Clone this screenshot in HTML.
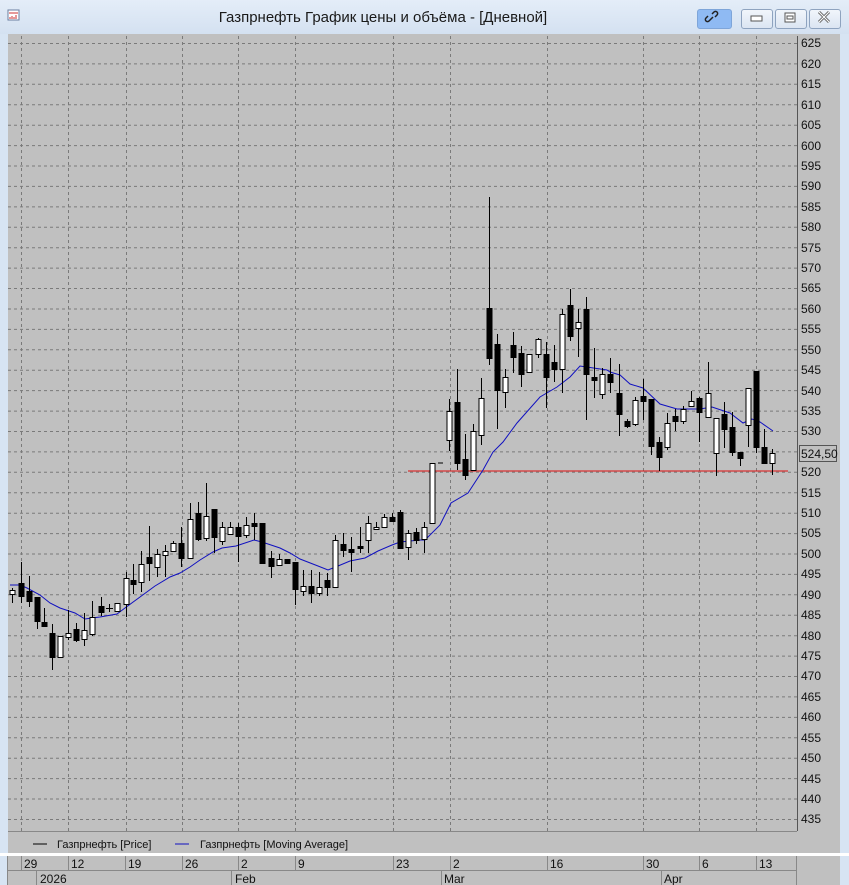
<!DOCTYPE html>
<html><head><meta charset="utf-8"><style>
html,body{margin:0;padding:0;width:849px;height:885px;overflow:hidden;background:#d7e4f3;font-family:"Liberation Sans","DejaVu Sans",sans-serif;}
.title{position:absolute;left:0;top:0;width:849px;height:34px;background:linear-gradient(#e4edf8,#d4e1f1);}
.title .t{position:absolute;left:0;width:766px;top:9px;text-align:center;font-size:15px;color:#1a1a1a;}
.btn{position:absolute;top:9px;height:18px;border:1px solid #8ea3bf;border-radius:3px;background:linear-gradient(#f1f5fb,#dbe5f2);}
svg{position:absolute;left:0;top:0;}
</style></head><body>
<div class="title"><div class="t">Газпрнефть График цены и объёма - [Дневной]</div>
<div class="btn" style="left:697px;width:33px;background:#8fbaf3;border-color:#7ea5d9"></div>
<div class="btn" style="left:741px;width:30px"></div>
<div class="btn" style="left:775px;width:30px"></div>
<div class="btn" style="left:809px;width:30px"></div>
</div>
<svg width="849" height="885" xmlns="http://www.w3.org/2000/svg">
<rect x="8" y="10" width="11" height="10" fill="#fff" stroke="#6b7fa0"/>
<path d="M9 13h9M10 17v2M12 16v3M14 17v2M16 15v4" stroke="#c33" stroke-width="1"/>
<path d="M707 22l4-4M710 15l2-2a2 2 0 0 1 3 3l-2 2M709 20l-2 2a2 2 0 0 1-3-3l2-2" stroke="#222" stroke-width="1.5" fill="none" transform="translate(2,-1)"/>
<rect x="751" y="16" width="11" height="5" fill="#fff" stroke="#555"/>
<rect x="785" y="13" width="10" height="9" fill="#fff" stroke="#555"/><rect x="787" y="16" width="6" height="3" fill="none" stroke="#555"/>
<path d="M819 12l10 10M829 12l-10 10" stroke="#666" stroke-width="3"/><path d="M819 12l10 10M829 12l-10 10" stroke="#fff" stroke-width="1"/>
<rect x="8" y="34" width="832" height="820" fill="#c0c0c0"/>
<g stroke="#7a7a7a" stroke-dasharray="3,3" stroke-width="1">
<path d="M8 43.5H797M8 63.9H797M8 84.3H797M8 104.8H797M8 125.2H797M8 145.6H797M8 166H797M8 186.4H797M8 206.9H797M8 227.3H797M8 247.7H797M8 268.1H797M8 288.5H797M8 309H797M8 329.4H797M8 349.8H797M8 370.2H797M8 390.6H797M8 411.1H797M8 431.5H797M8 451.9H797M8 472.3H797M8 492.7H797M8 513.2H797M8 533.6H797M8 554H797M8 574.4H797M8 594.8H797M8 615.3H797M8 635.7H797M8 656.1H797M8 676.5H797M8 696.9H797M8 717.4H797M8 737.8H797M8 758.2H797M8 778.6H797M8 799H797M8 819.5H797"/>
<path d="M21.5 36V831M68.5 36V831M126.5 36V831M182.5 36V831M238.5 36V831M295.5 36V831M393.5 36V831M450.5 36V831M547.5 36V831M643.5 36V831M699.5 36V831M756.5 36V831"/>
</g>
<line x1="797.5" y1="36" x2="797.5" y2="831" stroke="#555"/>
<g font-size="12" fill="#111">
<text x="801" y="47">625</text><text x="801" y="68">620</text><text x="801" y="88">615</text><text x="801" y="109">610</text><text x="801" y="129">605</text><text x="801" y="150">600</text><text x="801" y="170">595</text><text x="801" y="190">590</text><text x="801" y="211">585</text><text x="801" y="231">580</text><text x="801" y="252">575</text><text x="801" y="272">570</text><text x="801" y="292">565</text><text x="801" y="313">560</text><text x="801" y="333">555</text><text x="801" y="354">550</text><text x="801" y="374">545</text><text x="801" y="395">540</text><text x="801" y="415">535</text><text x="801" y="435">530</text><text x="801" y="476">520</text><text x="801" y="497">515</text><text x="801" y="517">510</text><text x="801" y="537">505</text><text x="801" y="558">500</text><text x="801" y="578">495</text><text x="801" y="599">490</text><text x="801" y="619">485</text><text x="801" y="640">480</text><text x="801" y="660">475</text><text x="801" y="680">470</text><text x="801" y="701">465</text><text x="801" y="721">460</text><text x="801" y="742">455</text><text x="801" y="762">450</text><text x="801" y="783">445</text><text x="801" y="803">440</text><text x="801" y="823">435</text>
</g>
<rect x="799.5" y="445.5" width="37" height="16" fill="#c0c0c0" stroke="#555"/>
<text x="801" y="458" font-size="12" fill="#111">524,50</text>
<line x1="408" y1="471" x2="788" y2="471" stroke="#e01010" stroke-width="1"/>
<polyline fill="none" stroke="#1010c0" stroke-width="1" points="10,585 20,585 27,588 40,595 50,603 60,608 75,613 85,619 92,618 100,617 117,614 125,608 140,597 155,586 170,577 180,573 190,567 200,560 213,552 222,548 236,546 254,540 262,542 280,548 290,553 300,559 318,566 328,570 338,566 350,561 365,558 378,551 392,545 400,542 420,540 425,540 440,525 451,503 468,493 483,470 493,452 503,442 517,423 540,397 557,387 570,377 580,366 607,370 610,372 620,375 630,384 643,388 660,404 677,409 700,409 712,407 730,413 743,423 752,419 760,422 773,431"/>
<g stroke="#000" stroke-width="1">
<path d="M12.5 588V603M21.5 562V603M29.5 576V607M37.5 597V629M44.5 608V626M52.5 624V670M60.5 636V657M68.5 610V640M76.5 623V642M84.5 613V646M92.5 601V636M101.5 597V616M109.5 604V612M117.5 603V611M126.5 572V617M133.5 564V594M141.5 551V592M149.5 526V581M157.5 549V577M165.5 545V577M173.5 541V552M181.5 527V567M190.5 503V558M198.5 502V541M206.5 483V541M214.5 509V553M222.5 522V545M230.5 522V535M238.5 523V562M246.5 517V538M254.5 513V540M262.5 523V563M271.5 551V578M279.5 554V566M287.5 559V563M295.5 562V605M303.5 570V596M311.5 570V603M319.5 572V596M327.5 573V596M335.5 535V587M343.5 533V557M351.5 537V572M360.5 527V553M368.5 516V553M376.5 522V530M384.5 514V527M392.5 513V521M400.5 510V549M408.5 530V560M416.5 528V544M424.5 522V553M432.5 463V523M449.5 399V451M457.5 369V470M465.5 434V480M473.5 424V470M481.5 378V445M489.5 197V365M497.5 334V429M505.5 369V408M513.5 332V373M521.5 346V387M529.5 354V372M538.5 338V358M546.5 342V408M554.5 345V382M562.5 309V393M570.5 289V341M578.5 309V357M586.5 297V420M594.5 348V398M602.5 368V399M610.5 358V393M619.5 364V436M627.5 419V428M635.5 397V426M643.5 379V420M651.5 399V455M659.5 437V471M667.5 413V450M675.5 409V431M683.5 406V424M691.5 391V407M699.5 397V442M708.5 362V417M716.5 418V476M724.5 402V448M732.5 412V456M740.5 452V466M748.5 388V447M756.5 371V453M764.5 429V463M772.5 449V475M438 463H443M106 608.5H113"/>
</g>
<g stroke="#000" stroke-width="1">
<rect x="10" y="590.5" width="5" height="4" fill="#fff"/>
<rect x="19" y="583.5" width="5" height="13" fill="#000"/>
<rect x="27" y="591.5" width="5" height="10" fill="#000"/>
<rect x="35" y="597.5" width="5" height="24" fill="#000"/>
<rect x="42" y="622.5" width="5" height="4" fill="#000"/>
<rect x="50" y="633.5" width="5" height="24" fill="#000"/>
<rect x="58" y="636.5" width="5" height="21" fill="#fff"/>
<rect x="66" y="633.5" width="5" height="4" fill="#fff"/>
<rect x="74" y="629.5" width="5" height="11" fill="#000"/>
<rect x="82" y="630.5" width="5" height="9" fill="#fff"/>
<rect x="90" y="617.5" width="5" height="17" fill="#fff"/>
<rect x="99" y="606.5" width="5" height="6" fill="#000"/>
<rect x="115" y="603.5" width="5" height="8" fill="#fff"/>
<rect x="124" y="578.5" width="5" height="26" fill="#fff"/>
<rect x="131" y="580.5" width="5" height="4" fill="#000"/>
<rect x="139" y="564.5" width="5" height="18" fill="#fff"/>
<rect x="147" y="557.5" width="5" height="6" fill="#000"/>
<rect x="155" y="554.5" width="5" height="13" fill="#fff"/>
<rect x="163" y="551.5" width="5" height="4" fill="#fff"/>
<rect x="171" y="543.5" width="5" height="8" fill="#fff"/>
<rect x="179" y="543.5" width="5" height="15" fill="#000"/>
<rect x="188" y="519.5" width="5" height="39" fill="#fff"/>
<rect x="196" y="513.5" width="5" height="26" fill="#000"/>
<rect x="204" y="516.5" width="5" height="22" fill="#fff"/>
<rect x="212" y="509.5" width="5" height="28" fill="#000"/>
<rect x="220" y="527.5" width="5" height="14" fill="#fff"/>
<rect x="228" y="527.5" width="5" height="7" fill="#fff"/>
<rect x="236" y="527.5" width="5" height="9" fill="#000"/>
<rect x="244" y="525.5" width="5" height="10" fill="#fff"/>
<rect x="252" y="523.5" width="5" height="3" fill="#000"/>
<rect x="260" y="523.5" width="5" height="40" fill="#000"/>
<rect x="269" y="558.5" width="5" height="8" fill="#000"/>
<rect x="277" y="559.5" width="5" height="6" fill="#fff"/>
<rect x="285" y="559.5" width="5" height="4" fill="#000"/>
<rect x="293" y="562.5" width="5" height="27" fill="#000"/>
<rect x="301" y="586.5" width="5" height="5" fill="#fff"/>
<rect x="309" y="586.5" width="5" height="7" fill="#000"/>
<rect x="317" y="587.5" width="5" height="6" fill="#fff"/>
<rect x="325" y="580.5" width="5" height="7" fill="#000"/>
<rect x="333" y="540.5" width="5" height="47" fill="#fff"/>
<rect x="341" y="544.5" width="5" height="6" fill="#000"/>
<rect x="349" y="549.5" width="5" height="3" fill="#000"/>
<rect x="358" y="546.5" width="5" height="2" fill="#000"/>
<rect x="366" y="523.5" width="5" height="17" fill="#fff"/>
<rect x="374" y="527.5" width="5" height="2" fill="#fff"/>
<rect x="382" y="517.5" width="5" height="10" fill="#fff"/>
<rect x="390" y="517.5" width="5" height="4" fill="#000"/>
<rect x="398" y="512.5" width="5" height="36" fill="#000"/>
<rect x="406" y="533.5" width="5" height="14" fill="#fff"/>
<rect x="414" y="532.5" width="5" height="8" fill="#000"/>
<rect x="422" y="527.5" width="5" height="12" fill="#fff"/>
<rect x="430" y="463.5" width="5" height="60" fill="#fff"/>
<rect x="447" y="411.5" width="5" height="29" fill="#fff"/>
<rect x="455" y="402.5" width="5" height="61" fill="#000"/>
<rect x="463" y="459.5" width="5" height="16" fill="#000"/>
<rect x="471" y="431.5" width="5" height="39" fill="#fff"/>
<rect x="479" y="398.5" width="5" height="37" fill="#fff"/>
<rect x="487" y="308.5" width="5" height="50" fill="#000"/>
<rect x="495" y="344.5" width="5" height="46" fill="#000"/>
<rect x="503" y="377.5" width="5" height="15" fill="#fff"/>
<rect x="511" y="345.5" width="5" height="12" fill="#000"/>
<rect x="519" y="353.5" width="5" height="21" fill="#000"/>
<rect x="527" y="354.5" width="5" height="18" fill="#fff"/>
<rect x="536" y="339.5" width="5" height="15" fill="#fff"/>
<rect x="544" y="354.5" width="5" height="23" fill="#000"/>
<rect x="552" y="362.5" width="5" height="7" fill="#000"/>
<rect x="560" y="314.5" width="5" height="55" fill="#fff"/>
<rect x="568" y="305.5" width="5" height="31" fill="#000"/>
<rect x="576" y="322.5" width="5" height="6" fill="#fff"/>
<rect x="584" y="309.5" width="5" height="65" fill="#000"/>
<rect x="592" y="377.5" width="5" height="3" fill="#000"/>
<rect x="600" y="374.5" width="5" height="20" fill="#fff"/>
<rect x="608" y="374.5" width="5" height="8" fill="#000"/>
<rect x="617" y="393.5" width="5" height="21" fill="#000"/>
<rect x="625" y="421.5" width="5" height="5" fill="#000"/>
<rect x="633" y="400.5" width="5" height="24" fill="#fff"/>
<rect x="641" y="396.5" width="5" height="5" fill="#000"/>
<rect x="649" y="399.5" width="5" height="47" fill="#000"/>
<rect x="657" y="442.5" width="5" height="15" fill="#000"/>
<rect x="665" y="423.5" width="5" height="24" fill="#fff"/>
<rect x="673" y="416.5" width="5" height="5" fill="#000"/>
<rect x="681" y="409.5" width="5" height="12" fill="#fff"/>
<rect x="689" y="401.5" width="5" height="5" fill="#fff"/>
<rect x="697" y="398.5" width="5" height="14" fill="#000"/>
<rect x="706" y="393.5" width="5" height="24" fill="#fff"/>
<rect x="714" y="418.5" width="5" height="35" fill="#fff"/>
<rect x="722" y="414.5" width="5" height="15" fill="#000"/>
<rect x="730" y="427.5" width="5" height="25" fill="#000"/>
<rect x="738" y="452.5" width="5" height="6" fill="#000"/>
<rect x="746" y="388.5" width="5" height="37" fill="#fff"/>
<rect x="754" y="371.5" width="5" height="76" fill="#000"/>
<rect x="762" y="447.5" width="5" height="16" fill="#000"/>
<rect x="770" y="453.5" width="5" height="10" fill="#fff"/>
</g>
<line x1="8" y1="831.5" x2="797" y2="831.5" stroke="#888"/>
<line x1="33" y1="844" x2="47" y2="844" stroke="#000"/>
<text x="57" y="848" font-size="11" fill="#111">Газпрнефть [Price]</text>
<line x1="175" y1="844" x2="189" y2="844" stroke="#1010c0"/>
<text x="200" y="848" font-size="11" fill="#111">Газпрнефть [Moving Average]</text>
<rect x="0" y="853" width="849" height="3" fill="#fff"/>
<rect x="8" y="856" width="832" height="29" fill="#c0c0c0"/>
<g stroke="#888">
<path d="M8 870.5H796M796.5 856V885M7.5 856V885M21.5 856V870M68.5 856V870M125.5 856V870M182.5 856V870M238.5 856V870M295.5 856V870M393.5 856V870M450.5 856V870M547.5 856V870M643.5 856V870M699.5 856V870M756.5 856V870M36.5 870V885M231.5 870V885M441.5 870V885M661.5 870V885"/>
</g>
<g font-size="12" fill="#111">
<text x="24" y="868">29</text><text x="71" y="868">12</text><text x="128" y="868">19</text><text x="185" y="868">26</text><text x="241" y="868">2</text><text x="298" y="868">9</text><text x="396" y="868">23</text><text x="453" y="868">2</text><text x="550" y="868">16</text><text x="646" y="868">30</text><text x="702" y="868">6</text><text x="759" y="868">13</text>
<text x="40" y="883">2026</text><text x="235" y="883">Feb</text><text x="444" y="883">Mar</text><text x="664" y="883">Apr</text>
</g>
</svg>
</body></html>
